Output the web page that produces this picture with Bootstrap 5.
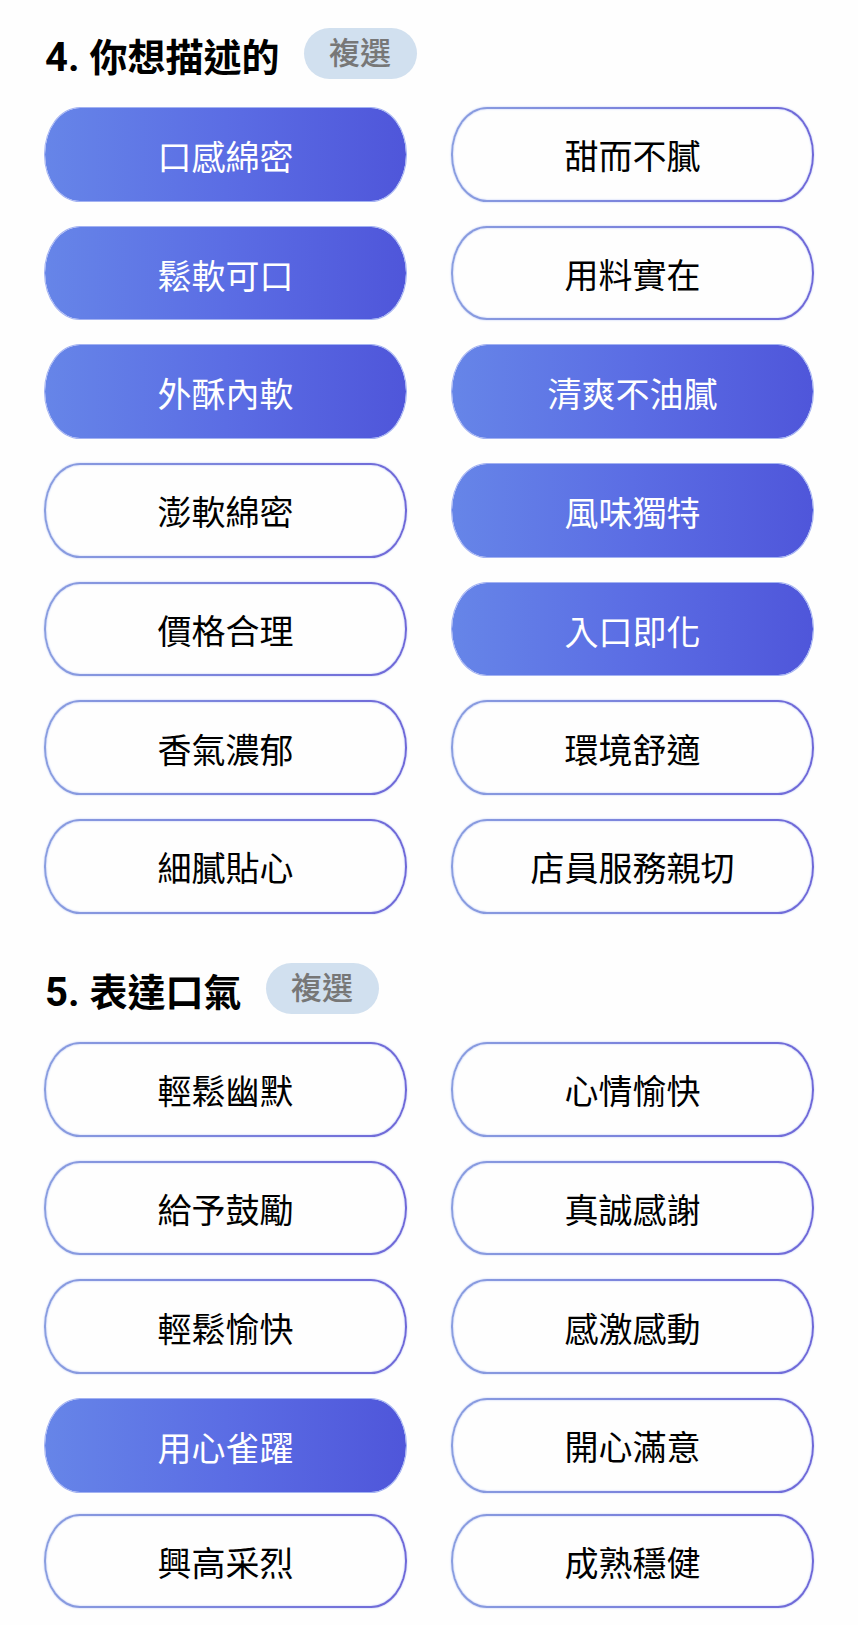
<!DOCTYPE html>
<html lang="zh-Hant">
<head>
<meta charset="utf-8">
<meta name="viewport" content="width=device-width, initial-scale=1">
<title>評論選項</title>
<link href="https://cdn.jsdelivr.net/npm/bootstrap@5.3.0/dist/css/bootstrap.min.css" rel="stylesheet">
<style>
  body { background: #fefefe; color: #000; font-family: Roboto, "Noto Sans CJK TC", sans-serif; }
  .survey { padding: 28px 44px 16px; }
  .question + .question { margin-top: 49px; }
  .question-head { gap: 24px; margin-bottom: 28px; }
  .question-title { font-size: 38px; line-height: 46px; padding: 7px 0 0 1px; height: 51px; }
  .question-number { font-size: 40px; white-space: pre; }
  .multi-tag { background: #d1e0ef; color: #777; font-size: 31px; line-height: 51px; width: 113px; border-radius: 26px; }
  .options { display: grid; grid-template-columns: 1fr 1fr; gap: 24px 44px; }
  .options-last { margin-top: 21px; }
  .btn.choice {
    --bs-btn-padding-y: 0;
    --bs-btn-padding-x: 8px;
    aspect-ratio: 23 / 6;
    padding-top: 6px;
    font-size: 34px;
    line-height: 40px;
    color: #000;
    border: 2px solid transparent;
    border-radius: 36px / 50%;
    box-shadow: 0 0 2px #b3c2f6, inset 0 0 2px #b3c2f6;
    background: linear-gradient(#fefefe, #fefefe) padding-box,
                linear-gradient(90deg, #8a9ee0, #7b83dc 50%, #6f68d8) border-box;
  }
  .btn-check:checked + .btn.choice {
    color: #fff;
    border: 1px solid #a3b2f2;
    padding-top: 7px;
    box-shadow: none;
    background: linear-gradient(90deg, #6685e8, #5b6de4 50%, #4f56da) padding-box;
  }
</style>
</head>
<body>
<main class="survey">
  <section class="question" aria-labelledby="q4">
    <div class="question-head d-flex align-items-start">
      <h2 class="question-title fw-bold mb-0" id="q4"><span class="question-number">4. </span>你想描述的</h2>
      <span class="multi-tag text-center fw-medium">複選</span>
    </div>
    <div class="options">
      <input type="checkbox" class="btn-check" id="d1" checked><label class="btn choice d-flex align-items-center justify-content-center" for="d1">口感綿密</label>
      <input type="checkbox" class="btn-check" id="d2"><label class="btn choice d-flex align-items-center justify-content-center" for="d2">甜而不膩</label>
      <input type="checkbox" class="btn-check" id="d3" checked><label class="btn choice d-flex align-items-center justify-content-center" for="d3">鬆軟可口</label>
      <input type="checkbox" class="btn-check" id="d4"><label class="btn choice d-flex align-items-center justify-content-center" for="d4">用料實在</label>
      <input type="checkbox" class="btn-check" id="d5" checked><label class="btn choice d-flex align-items-center justify-content-center" for="d5">外酥內軟</label>
      <input type="checkbox" class="btn-check" id="d6" checked><label class="btn choice d-flex align-items-center justify-content-center" for="d6">清爽不油膩</label>
      <input type="checkbox" class="btn-check" id="d7"><label class="btn choice d-flex align-items-center justify-content-center" for="d7">澎軟綿密</label>
      <input type="checkbox" class="btn-check" id="d8" checked><label class="btn choice d-flex align-items-center justify-content-center" for="d8">風味獨特</label>
      <input type="checkbox" class="btn-check" id="d9"><label class="btn choice d-flex align-items-center justify-content-center" for="d9">價格合理</label>
      <input type="checkbox" class="btn-check" id="d10" checked><label class="btn choice d-flex align-items-center justify-content-center" for="d10">入口即化</label>
      <input type="checkbox" class="btn-check" id="d11"><label class="btn choice d-flex align-items-center justify-content-center" for="d11">香氣濃郁</label>
      <input type="checkbox" class="btn-check" id="d12"><label class="btn choice d-flex align-items-center justify-content-center" for="d12">環境舒適</label>
      <input type="checkbox" class="btn-check" id="d13"><label class="btn choice d-flex align-items-center justify-content-center" for="d13">細膩貼心</label>
      <input type="checkbox" class="btn-check" id="d14"><label class="btn choice d-flex align-items-center justify-content-center" for="d14">店員服務親切</label>
    </div>
  </section>

  <section class="question" aria-labelledby="q5">
    <div class="question-head d-flex align-items-start">
      <h2 class="question-title fw-bold mb-0" id="q5"><span class="question-number">5. </span>表達口氣</h2>
      <span class="multi-tag text-center fw-medium">複選</span>
    </div>
    <div class="options">
      <input type="checkbox" class="btn-check" id="t1"><label class="btn choice d-flex align-items-center justify-content-center" for="t1">輕鬆幽默</label>
      <input type="checkbox" class="btn-check" id="t2"><label class="btn choice d-flex align-items-center justify-content-center" for="t2">心情愉快</label>
      <input type="checkbox" class="btn-check" id="t3"><label class="btn choice d-flex align-items-center justify-content-center" for="t3">給予鼓勵</label>
      <input type="checkbox" class="btn-check" id="t4"><label class="btn choice d-flex align-items-center justify-content-center" for="t4">真誠感謝</label>
      <input type="checkbox" class="btn-check" id="t5"><label class="btn choice d-flex align-items-center justify-content-center" for="t5">輕鬆愉快</label>
      <input type="checkbox" class="btn-check" id="t6"><label class="btn choice d-flex align-items-center justify-content-center" for="t6">感激感動</label>
      <input type="checkbox" class="btn-check" id="t7" checked><label class="btn choice d-flex align-items-center justify-content-center" for="t7">用心雀躍</label>
      <input type="checkbox" class="btn-check" id="t8"><label class="btn choice d-flex align-items-center justify-content-center" for="t8">開心滿意</label>
    </div>
    <div class="options options-last">
      <input type="checkbox" class="btn-check" id="t9"><label class="btn choice d-flex align-items-center justify-content-center" for="t9">興高采烈</label>
      <input type="checkbox" class="btn-check" id="t10"><label class="btn choice d-flex align-items-center justify-content-center" for="t10">成熟穩健</label>
    </div>
  </section>
</main>
<script src="https://cdn.jsdelivr.net/npm/bootstrap@5.3.0/dist/js/bootstrap.bundle.min.js"></script>
</body>
</html>
